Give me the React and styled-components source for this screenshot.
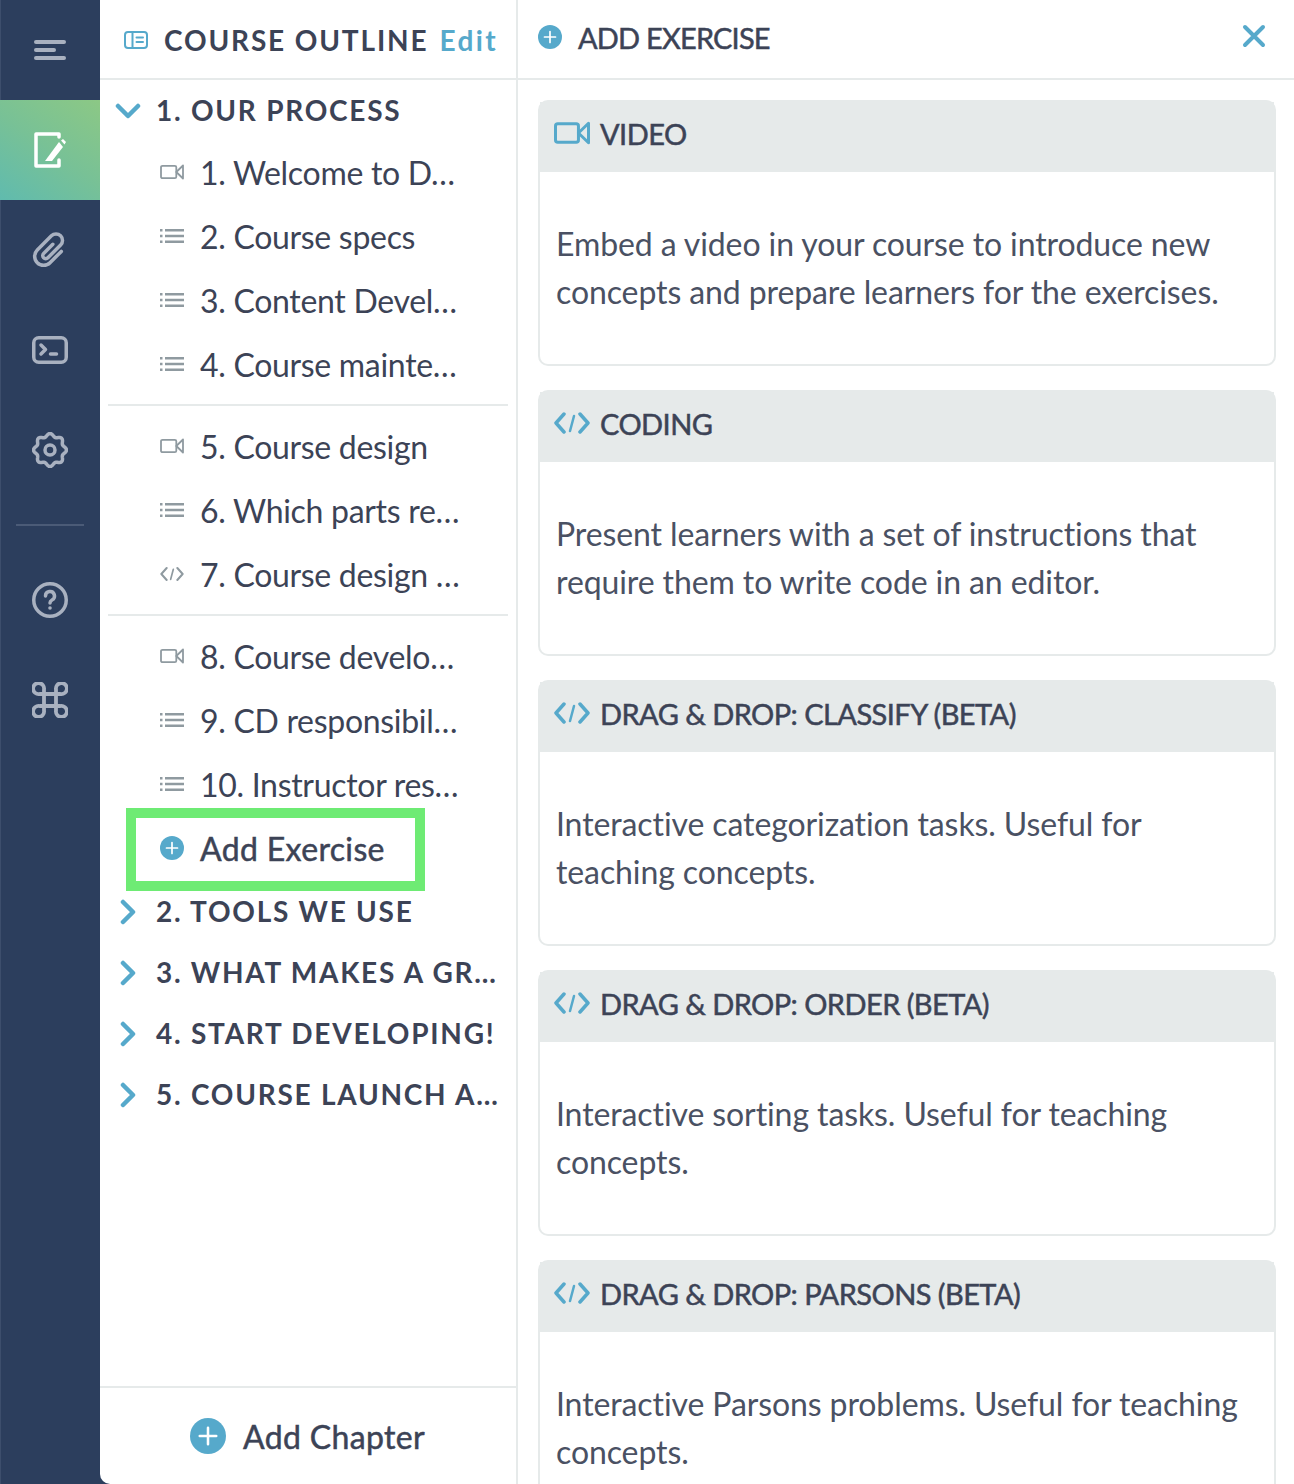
import React from 'react'
import styled, { createGlobalStyle, css } from 'styled-components'

const BLUE = '#56a9cb'
const INK = '#3c4356'
const GREY = '#8f9aa0'
const LINE = '#e6eaea'
const RAIL_ICON = '#a9b1c0'

// Lato has no medium cut here, so thicken the regular one a bit
const medium = css`
  font-weight: 400;
  -webkit-text-stroke: 0.5px currentColor;
`

const GlobalStyle = createGlobalStyle`
  html, body {
    margin: 0;
    padding: 0;
    background: #ffffff;
  }
  * {
    box-sizing: border-box;
  }
`

const Page = styled.div`
  display: flex;
  width: 1294px;
  height: 1484px;
  overflow: hidden;
  background: #2c3e5d;
  font-family: Lato, 'Open Sans', sans-serif;
  color: ${INK};
`

const Rail = styled.nav`
  flex: 0 0 100px;
  display: flex;
  flex-direction: column;
  border-left: 1px solid #3d4e6c;
`

const RailItem = styled.div`
  height: 100px;
  margin-left: -1px;
  display: flex;
  align-items: center;
  justify-content: center;
  color: ${props => (props.$active ? '#ffffff' : RAIL_ICON)};
  background: ${props => (props.$active ? 'linear-gradient(35deg, #60bbae 0%, #78c196 50%, #8cc885 100%)' : 'transparent')};
`

const RailDivider = styled.div`
  height: 2px;
  margin: 24px 16px 24px 15px;
  background: #4b5b77;
`

const Outline = styled.aside`
  flex: 0 0 418px;
  min-width: 0;
  display: flex;
  flex-direction: column;
  background: #ffffff;
  border-right: 2px solid ${LINE};
  border-bottom-left-radius: 10px;
`

const OutlineHeader = styled.header`
  flex: 0 0 80px;
  display: flex;
  align-items: center;
  padding: 2px 0 0 24px;
  border-bottom: 2px solid ${LINE};
`

const HeaderTitle = styled.span`
  margin-left: 16px;
  font-size: 28px;
  font-weight: 700;
  letter-spacing: 1.85px;
  white-space: nowrap;
`

const EditLink = styled.a`
  margin-left: 11px;
  font-size: 28px;
  font-weight: 700;
  letter-spacing: 2.4px;
  color: ${BLUE};
`

const ChapterRow = styled.div`
  height: 61px;
  display: flex;
  align-items: center;
  white-space: nowrap;
`

const ChevronSlot = styled.span`
  flex: 0 0 56px;
  display: flex;
  justify-content: center;
  color: ${BLUE};
`

const ChapterTitle = styled.span`
  padding-bottom: 2px;
  font-size: 28px;
  font-weight: 700;
  letter-spacing: 1.75px;
`

const LessonRow = styled.div`
  position: relative;
  height: 64px;
  display: flex;
  align-items: center;
  padding: 0 0 2px 60px;
  white-space: nowrap;
  color: ${GREY};
`

const LessonTitle = styled.span`
  margin-left: 16px;
  font-size: 32px;
  letter-spacing: ${props => (props.$strong ? '0.35px' : '-0.3px')};
  color: ${INK};
  ${props => props.$strong && medium}
`

const Divider = styled.hr`
  height: 2px;
  margin: 7px 8px 9px;
  border: 0;
  background: ${LINE};
`

const Highlight = styled.span`
  position: absolute;
  left: 26px;
  top: -9px;
  width: 299px;
  height: 83px;
  border: 10px solid #6eeb74;
`

const Spacer = styled.div`
  flex: 1;
`

const OutlineFooter = styled.footer`
  flex: 0 0 98px;
  display: flex;
  align-items: center;
  justify-content: center;
  gap: 17px;
  padding-right: 1px;
  border-top: 2px solid ${LINE};
  font-size: 32px;
  letter-spacing: 0.35px;
  ${medium}
`

const Main = styled.main`
  flex: 1;
  min-width: 0;
  background: #ffffff;
`

const MainHeader = styled.header`
  height: 80px;
  display: flex;
  align-items: center;
  padding: 0 28px 4px 20px;
  border-bottom: 2px solid ${LINE};
`

const MainTitle = styled.h1`
  flex: 1;
  margin: 0 0 0 16px;
  font-size: 29px;
  letter-spacing: -0.8px;
  ${medium}
`

const CloseSlot = styled.span`
  display: flex;
  margin-bottom: 2px;
  color: ${BLUE};
`

const CardList = styled.div`
  display: flex;
  flex-direction: column;
  gap: 24px;
  padding: 20px 18px 0 20px;
`

const Card = styled.section`
  height: 266px;
  flex: 0 0 auto;
  border: 2px solid ${LINE};
  border-radius: 10px;
`

const CardHeader = styled.div`
  height: 70px;
  display: flex;
  align-items: center;
  gap: 10px;
  padding: 0 0 8px 14px;
  background: ${LINE};
  color: ${BLUE};
`

const CardTitle = styled.h2`
  margin: 0;
  font-size: 29px;
  letter-spacing: -0.55px;
  color: ${INK};
  ${medium}
`

const CardText = styled.p`
  margin: 0;
  padding: 48px 16px 0;
  font-size: 32px;
  line-height: 48px;
  letter-spacing: -0.1px;
  color: #4a5163;
`

const line = {
  fill: 'none',
  stroke: 'currentColor',
  strokeLinecap: 'round',
  strokeLinejoin: 'round',
}

const MenuIcon = () => (
  <svg width="32" height="20" viewBox="0 0 32 20" fill="currentColor">
    <rect x="0" y="0" width="32" height="4" rx="2" />
    <rect x="0" y="8" width="22" height="4" rx="2" />
    <rect x="0" y="16" width="32" height="4" rx="2" />
  </svg>
)

const EditIcon = () => (
  <svg width="32" height="36" viewBox="0 0 32 36">
    <path d="M25 5V2H2v32h23v-6" {...line} strokeWidth="3.5" />
    <path d="M11 29l14-19 4 5-11 14z" fill="currentColor" />
    <path d="M27 8.500l2-1.500 3 3-1.500 2.500z" fill="currentColor" />
  </svg>
)

const ClipIcon = () => (
  <svg width="36" height="36" viewBox="0 0 36 36" {...line} strokeWidth="3.5" overflow="visible">
    <g transform="translate(18 18) rotate(45)">
      <path d="M9 -7V9A9 9 0 0 1 -9 9V-11A6.500 6.500 0 0 1 4 -11V7A3 3 0 0 1 -2 7V-6" />
    </g>
  </svg>
)

const TerminalIcon = () => (
  <svg width="36" height="28" viewBox="0 0 36 28" {...line} strokeWidth="3.5">
    <rect x="1.750" y="1.750" width="32.500" height="24.500" rx="5" />
    <path d="M9 9l4.500 4.500L9 18" />
    <path d="M18.500 18h6" />
  </svg>
)

const gearPath = (() => {
  const points = []
  for (let i = 0; i < 96; i++) {
    const a = (i / 96) * Math.PI * 2
    const r = 15 + 1.500 * Math.cos(a * 8)
    points.push(`${(18 + r * Math.cos(a)).toFixed(2)} ${(18 + r * Math.sin(a)).toFixed(2)}`)
  }
  return `M${points.join('L')}Z`
})()

const GearIcon = () => (
  <svg width="36" height="36" viewBox="0 0 36 36" {...line} strokeWidth="3.5">
    <path d={gearPath} />
    <circle cx="18" cy="18" r="5" />
  </svg>
)

const HelpIcon = () => (
  <svg width="36" height="36" viewBox="0 0 36 36" {...line} strokeWidth="3.5">
    <circle cx="18" cy="18" r="16.250" />
    <path d="M13.500 14a4.500 4.500 0 1 1 6.500 4c-1.500.8-2 1.500-2 3" />
    <circle cx="18" cy="26" r="1.800" fill="currentColor" stroke="none" />
  </svg>
)

const CommandIcon = () => (
  <svg width="36" height="36" viewBox="0 0 36 36" {...line} strokeWidth="3.8">
    <path d="M12 12h12v12H12z" />
    <path d="M12 12H7.500A5.500 5.500 0 1 1 12 7.500z" />
    <path d="M24 12V7.500A5.500 5.500 0 1 1 28.500 12z" />
    <path d="M24 24h4.500A5.500 5.500 0 1 1 24 28.500z" />
    <path d="M12 24v4.500A5.500 5.500 0 1 1 7.500 24z" />
  </svg>
)

const OutlineIcon = () => (
  <svg width="24" height="18" viewBox="0 0 24 18" {...line} strokeWidth="2" style={{ color: BLUE }}>
    <rect x="1" y="1" width="22" height="16" rx="3" />
    <path d="M8.500 1v16" />
    <path d="M12.500 6.500h6.500M12.500 11h6.500" />
  </svg>
)

const PlusCircle = ({ size = 24 }) => (
  <svg width={size} height={size} viewBox="0 0 24 24" style={{ flex: 'none' }}>
    <circle cx="12" cy="12" r="12" fill={BLUE} />
    <path d="M12 6.500v11M6.500 12h11" stroke="#ffffff" strokeWidth="1.700" strokeLinecap="round" />
  </svg>
)

const CloseIcon = () => (
  <svg width="24" height="24" viewBox="0 0 24 24" {...line} strokeWidth="4">
    <path d="M3 3l18 18M21 3L3 21" />
  </svg>
)

const ChevronDown = () => (
  <svg width="26" height="16" viewBox="0 0 26 16" {...line} strokeWidth="4.500">
    <path d="M3 3l10 10L23 3" />
  </svg>
)

const ChevronRight = () => (
  <svg width="16" height="26" viewBox="0 0 16 26" {...line} strokeWidth="4.500">
    <path d="M3 3l10 10L3 23" />
  </svg>
)

const VideoIcon = ({ big }) => (
  <svg width={big ? 36 : 24} height={big ? 24 : 16} viewBox="0 0 24 16" {...line} strokeWidth={big ? 2 : 1.800}>
    <rect x="1" y="1.800" width="15.300" height="12.400" rx="1.500" />
    <path d="M16.300 8L23 1.500v13z" />
  </svg>
)

const ListIcon = () => (
  <svg width="24" height="16" viewBox="0 0 24 16" fill="currentColor">
    <rect x="0" y="1" width="2.500" height="2.500" />
    <rect x="0" y="6.750" width="2.500" height="2.500" />
    <rect x="0" y="12.500" width="2.500" height="2.500" />
    <rect x="5" y="1" width="19" height="2.500" />
    <rect x="5" y="6.750" width="19" height="2.500" />
    <rect x="5" y="12.500" width="19" height="2.500" />
  </svg>
)

const CodeIcon = ({ big }) => (
  <svg width={big ? 36 : 24} height={big ? 24 : 16} viewBox="0 0 36 24" {...line} strokeWidth={big ? 3.5 : 3}>
    <path d="M10 3L2 12l8 9" />
    <path d="M26 3l8 9-8 9" />
    <path d="M20 5l-4 15" strokeWidth="2.500" />
  </svg>
)

const lessonIcons = {
  video: <VideoIcon />,
  list: <ListIcon />,
  code: <CodeIcon />,
}

const lessonGroups = [
  [
    ['video', '1. Welcome to D…'],
    ['list', '2. Course specs'],
    ['list', '3. Content Devel…'],
    ['list', '4. Course mainte…'],
  ],
  [
    ['video', '5. Course design'],
    ['list', '6. Which parts re…'],
    ['code', '7. Course design …'],
  ],
  [
    ['video', '8. Course develo…'],
    ['list', '9. CD responsibil…'],
    ['list', '10. Instructor res…'],
  ],
]

const closedChapters = [
  '2. TOOLS WE USE',
  '3. WHAT MAKES A GR…',
  '4. START DEVELOPING!',
  '5. COURSE LAUNCH A…',
]

const exercises = [
  { icon: <VideoIcon big />, title: 'VIDEO', text: 'Embed a video in your course to introduce new concepts and prepare learners for the exercises.' },
  { icon: <CodeIcon big />, title: 'CODING', text: 'Present learners with a set of instructions that require them to write code in an editor.' },
  { icon: <CodeIcon big />, title: 'DRAG & DROP: CLASSIFY (BETA)', text: 'Interactive categorization tasks. Useful for teaching concepts.' },
  { icon: <CodeIcon big />, title: 'DRAG & DROP: ORDER (BETA)', text: 'Interactive sorting tasks. Useful for teaching concepts.' },
  { icon: <CodeIcon big />, title: 'DRAG & DROP: PARSONS (BETA)', text: 'Interactive Parsons problems. Useful for teaching concepts.' },
]

export default function App() {
  return (
    <Page>
      <GlobalStyle />
      <Rail>
        <RailItem><MenuIcon /></RailItem>
        <RailItem $active><EditIcon /></RailItem>
        <RailItem><ClipIcon /></RailItem>
        <RailItem><TerminalIcon /></RailItem>
        <RailItem><GearIcon /></RailItem>
        <RailDivider />
        <RailItem><HelpIcon /></RailItem>
        <RailItem><CommandIcon /></RailItem>
      </Rail>

      <Outline>
        <OutlineHeader>
          <OutlineIcon />
          <HeaderTitle>COURSE OUTLINE</HeaderTitle>
          <EditLink>Edit</EditLink>
        </OutlineHeader>

        <ChapterRow>
          <ChevronSlot><ChevronDown /></ChevronSlot>
          <ChapterTitle>1. OUR PROCESS</ChapterTitle>
        </ChapterRow>

        {lessonGroups.map((group, i) => (
          <React.Fragment key={i}>
            {group.map(([icon, title]) => (
              <LessonRow key={title}>
                {lessonIcons[icon]}
                <LessonTitle>{title}</LessonTitle>
              </LessonRow>
            ))}
            {i < lessonGroups.length - 1 && <Divider />}
          </React.Fragment>
        ))}

        <LessonRow>
          <PlusCircle />
          <LessonTitle $strong>Add Exercise</LessonTitle>
          <Highlight />
        </LessonRow>

        {closedChapters.map(title => (
          <ChapterRow key={title}>
            <ChevronSlot><ChevronRight /></ChevronSlot>
            <ChapterTitle>{title}</ChapterTitle>
          </ChapterRow>
        ))}

        <Spacer />

        <OutlineFooter>
          <PlusCircle size={36} />
          Add Chapter
        </OutlineFooter>
      </Outline>

      <Main>
        <MainHeader>
          <PlusCircle />
          <MainTitle>ADD EXERCISE</MainTitle>
          <CloseSlot><CloseIcon /></CloseSlot>
        </MainHeader>
        <CardList>
          {exercises.map(item => (
            <Card key={item.title}>
              <CardHeader>
                {item.icon}
                <CardTitle>{item.title}</CardTitle>
              </CardHeader>
              <CardText>{item.text}</CardText>
            </Card>
          ))}
        </CardList>
      </Main>
    </Page>
  )
}
